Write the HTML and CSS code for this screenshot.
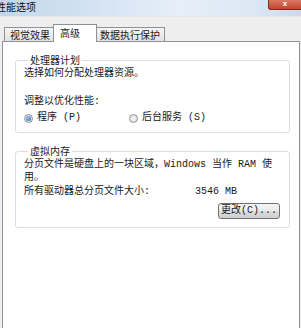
FILE: index.html
```html
<!DOCTYPE html>
<html lang="zh-CN">

<head>
  <meta charset="UTF-8">
  <title>性能选项</title>
  <link rel="stylesheet" href="styles.css">
</head>

<body>
  <div class="window">
    <div class="titlebar">
      <span class="title">性能选项</span>
      <span class="close">x</span>
    </div>

    <div class="tabs">
      <div class="tab first">视觉效果</div>
      <div class="tab active">高级</div>
      <div class="tab">数据执行保护</div>
    </div>

    <div class="panel">
      <fieldset class="group">
        <legend>处理器计划</legend>
        <div class="line">选择如何分配处理器资源。</div>
        <div class="line gap">调整以优化性能:</div>
        <div class="radios">
          <label class="option wide"><span class="radio on"></span>程序 (P)</label>
          <label class="option"><span class="radio"></span>后台服务 (S)</label>
        </div>
      </fieldset>

      <fieldset class="group second">
        <legend>虚拟内存</legend>
        <div class="para">分页文件是硬盘上的一块区域，Windows 当作 RAM 使</div>
        <div class="para">用。</div>
        <div class="size">
          <span class="size-label">所有驱动器总分页文件大小:</span>
          <span>3546 MB</span>
        </div>
        <div class="actions">
          <button class="btn">更改(C)...</button>
        </div>
      </fieldset>
    </div>
  </div>
</body>

</html>
```

FILE: styles.css
```css
* {
  box-sizing: border-box;
}

body {
  margin: 0;
  width: 301px;
  height: 328px;
  overflow: hidden;
  background: #eeeeee;
  font-family: "Liberation Mono", "Noto Sans CJK SC", monospace;
  font-size: 10px;
  color: #1a1a1a;
}

.window {
  height: 328px;
  display: flex;
  flex-direction: column;
}

.titlebar {
  height: 17px;
  flex: none;
  display: flex;
  align-items: flex-start;
  justify-content: space-between;
  background: linear-gradient(90deg, #c2d6eb 0%, #d3e2f2 30%, #e6eff9 60%, #dbe7f4 85%, #c9dbee 100%);
  border-bottom: 1px solid #dfe6ee;
}

.title {
  margin-left: -4px;
  line-height: 13px;
  font-size: 10px;
  font-family: "Noto Sans CJK SC", sans-serif;
  color: #111;
}

.close {
  width: 33px;
  height: 10px;
  background: linear-gradient(#d97a67, #c3432c);
  border: 1px solid #8a2a1c;
  border-top: none;
  border-right: none;
  border-radius: 0 0 0 3px;
  color: #fff;
  font-family: "Liberation Sans", sans-serif;
  font-weight: bold;
  font-size: 8px;
  line-height: 8px;
  text-align: center;
}

.tabs {
  display: flex;
  align-items: flex-end;
  padding: 7px 0 0 4px;
  flex: none;
  position: relative;
  z-index: 1;
}

.tab {
  height: 14px;
  padding: 0 0 0 5px;
  line-height: 13px;
  border: 1px solid #8e9199;
  border-bottom: none;
  border-left: none;
  background: linear-gradient(#f6f6f6, #e2e2e2);
  font-family: "Noto Sans CJK SC", sans-serif;
  font-size: 10px;
}

.tab.first {
  width: 50px;
  border-left: 1px solid #8e9199;
}

.tab.active {
  width: 44px;
  height: 18px;
  margin-bottom: -1px;
  margin-left: -1px;
  border-left: 1px solid #8e9199;
  background: #fff;
  line-height: 15px;
  padding-left: 6px;
}

.tab:last-child {
  width: 68px;
  padding-left: 3px;
}

.panel {
  flex: 1;
  margin: 0 1px 0 2px;
  background: #fff;
  border: 1px solid #8e9199;
  border-bottom: none;
  padding: 11px 9px 0 12px;
}

.group {
  margin: 0;
  padding: 0 8px 7px 8px;
  border: 1px solid #d5dfe5;
  border-radius: 3px;
}

.group.second {
  margin-top: 11px;
  padding-bottom: 8px;
}

legend {
  margin-left: 4px;
  padding: 0 2px;
  line-height: 14px;
  font-family: "Noto Sans CJK SC", sans-serif;
}

.line {
  line-height: 14px;
}

.line.gap {
  margin-top: 14px;
}

.radios {
  display: flex;
  margin-top: 2px;
  line-height: 14px;
}

.option {
  display: flex;
  align-items: center;
  gap: 4px;
}

.option.wide {
  width: 105px;
}

.radio {
  width: 9px;
  height: 9px;
  border-radius: 50%;
  border: 1px solid #8f9398;
  background: radial-gradient(#f6f6f6, #d6d6d6);
  display: flex;
  align-items: center;
  justify-content: center;
}

.radio.on::after {
  content: "";
  width: 5px;
  height: 5px;
  border-radius: 50%;
  background: radial-gradient(circle at 40% 35%, #8fc6f2, #1f6fb8);
}

.para {
  line-height: 13px;
}

.size {
  display: flex;
  line-height: 13px;
  margin-top: 1px;
}

.size-label {
  width: 171px;
}

.actions {
  display: flex;
  justify-content: flex-end;
  margin-top: 5px;
  padding-right: 1px;
}

.btn {
  width: 62px;
  height: 16px;
  padding: 0;
  border: 1px solid #707070;
  border-radius: 3px;
  background: linear-gradient(#f4f4f4 0%, #ebebeb 50%, #dddddd 51%, #cfcfcf 100%);
  font-family: "Liberation Mono", "Noto Sans CJK SC", monospace;
  font-size: 10px;
  line-height: 14px;
  color: #1a1a1a;
}
```
